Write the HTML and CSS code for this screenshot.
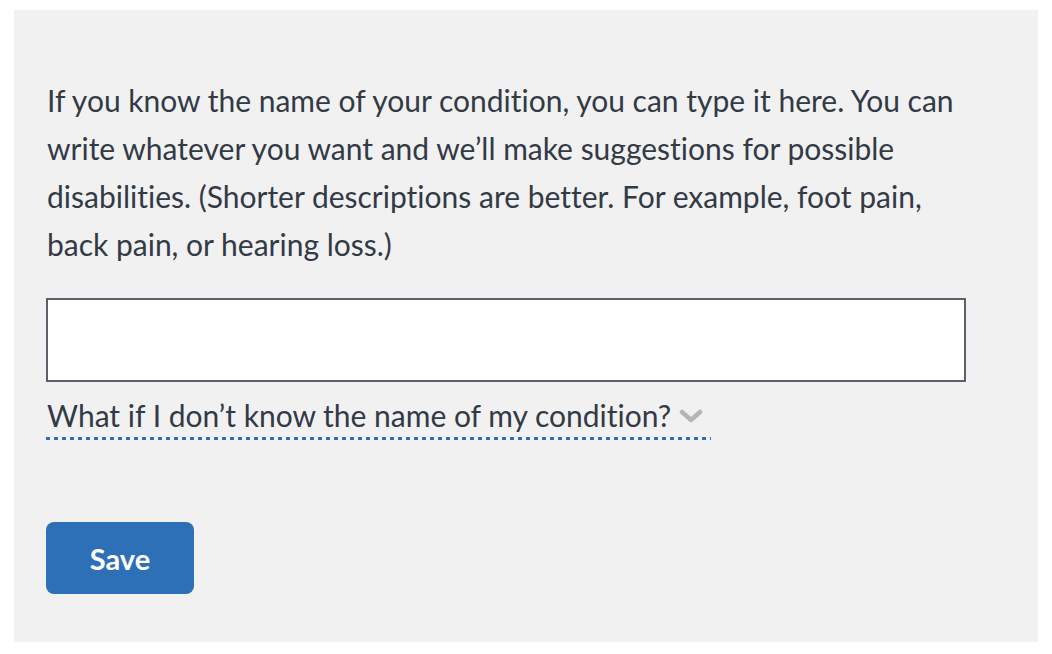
FILE: index.html
```html
<!DOCTYPE html>
<html lang="en">
<head>
<meta charset="utf-8">
<title>Condition</title>
<link rel="stylesheet" href="styles.css">
</head>
<body>
<div class="panel">
  <p class="intro">If you know the name of your condition, you can type it here. You can write whatever you want and we’ll make suggestions for possible disabilities. (Shorter descriptions are better. For example, foot pain, back pain, or hearing loss.)</p>
  <input class="field" type="text" aria-label="Condition">
  <div class="help-row">
    <button class="help" type="button">What if I don’t know the name of my condition?<svg class="chev" width="24" height="14" viewBox="0 0 24 14"><path d="M3 3 L12 11 L21 3" fill="none" stroke="#b3b5b9" stroke-width="4.5" stroke-linecap="round" stroke-linejoin="round"/></svg></button>
  </div>
  <button class="save" type="button">Save</button>
</div>
</body>
</html>
```
FILE: styles.css
```css
html, body {
  margin: 0;
  padding: 0;
  background: #ffffff;
}
body {
  font-family: Lato, "Open Sans", sans-serif;
  color: #323a45;
  font-variant-ligatures: none;
}
.panel {
  margin: 10px 14px 12px 14px;
  background: #f1f1f1;
  padding: 66px 32px 48px 32px;
  height: 518px;
}
.intro {
  margin: 0 0 30px 1px;
  width: 930px;
  font-size: 30px;
  line-height: 48px;
}
.field {
  display: block;
  box-sizing: border-box;
  width: 920px;
  height: 84px;
  margin: 0;
  border: 2px solid #5b616b;
  background: #ffffff;
  font-size: 28px;
  padding: 0 12px;
}
.help-row {
  margin-top: 14px;
  margin-bottom: 82px;
}
.help {
  font-family: inherit;
  font-variant-ligatures: none;
  background: none;
  border: none;
  background-image: repeating-linear-gradient(to right, #2e70b6 0, #2e70b6 4px, transparent 4px, transparent 8px);
  background-size: 100% 3px;
  background-position: left bottom;
  background-repeat: no-repeat;
  padding: 0 0 6px 1px;
  margin: 0;
  font-size: 30px;
  line-height: 38px;
  color: #323a45;
  display: inline-flex;
  align-items: center;
  gap: 8px;
  cursor: pointer;
}
.chev {
  margin-right: 8px;
  margin-top: 2px;
}
.save {
  display: block;
  width: 148px;
  height: 72px;
  border: none;
  border-radius: 8px;
  background: #2e70b6;
  color: #ffffff;
  font-family: inherit;
  font-weight: 700;
  font-size: 29px;
  padding: 0;
  cursor: pointer;
}
```
